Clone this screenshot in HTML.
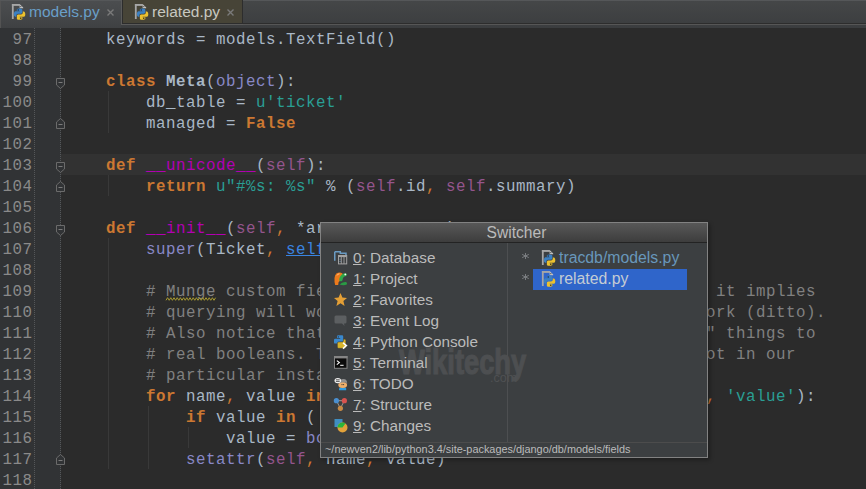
<!DOCTYPE html>
<html><head><meta charset="utf-8">
<style>
*{margin:0;padding:0;box-sizing:border-box}
html,body{width:866px;height:489px;overflow:hidden;background:#2B2B2B}
body{position:relative;font-family:"Liberation Sans",sans-serif}
.abs{position:absolute}
svg{position:absolute;overflow:visible}
#tabbar{position:absolute;left:0;top:0;width:866px;height:28px;background:linear-gradient(#454748,#3b3d3f)}
.tab{position:absolute;top:0;height:24px;font-size:15.5px;line-height:24px;white-space:pre}
#gutter{position:absolute;left:0;top:28px;width:61px;height:461px;background:#313335}
.dots{position:absolute;top:28px;width:1px;height:461px;background:repeating-linear-gradient(#555759 0 1px,transparent 1px 2px)}
.ln{position:absolute;left:0;width:32.5px;text-align:right;font-family:"Liberation Mono",monospace;font-size:15.8px;letter-spacing:0.52px;line-height:21px;color:#8a8a8a;height:21px;padding-top:2px}
.cl{position:absolute;left:66px;white-space:pre;font-family:"Liberation Mono",monospace;font-size:15.8px;letter-spacing:0.52px;line-height:21px;color:#A9B7C6;height:21px;padding-top:2px}
.k{color:#CC7832;font-weight:bold}
.meta{color:#A9B7C6;font-weight:bold}
.c{color:#CC7832}
.s{color:#2A9E94}
.m{color:#B200B2}
.sf{color:#94558D}
.b{color:#8888C6}
.cm{color:#808080}
.cmw{color:#808080;text-decoration:underline wavy #9a8a30;text-decoration-thickness:1px}
.lk{color:#3a84e0;text-decoration:underline}
.guide{position:absolute;width:1px;background:#393939}
.fold{position:absolute;left:56px}
#popup{position:absolute;left:320px;top:222px;width:388px;height:236px;background:#3C3F41;border:1px solid #828282;box-shadow:2px 2px 4px rgba(0,0,0,0.3)}
#ptitle{position:absolute;left:0;top:0;width:386px;height:20px;background:linear-gradient(#585858,#3d3d3d);border-bottom:1px solid #232323;color:#BBBBBB;font-size:15.6px;line-height:20px;text-align:center;padding-left:5px}
.item{position:absolute;left:32px;height:21px;line-height:21px;font-size:15.3px;color:#BBBBBB;white-space:pre}
.iico{position:absolute;left:13px}
#divider{position:absolute;left:186px;top:20px;width:1px;height:199px;background:#4d4f51}
#footer{position:absolute;left:0;top:219px;width:386px;height:15px;border-top:1px solid #4c4c4c;font-size:10.9px;line-height:13px;color:#BBBBBB;padding-left:4px;white-space:pre}
</style></head><body>

<div id="tabbar">
  <div class="abs" style="left:0;top:23px;width:866px;height:1px;background:#2d2d2d"></div>
  <div class="abs" style="left:0;top:24px;width:866px;height:1px;background:#565656"></div>
  <div class="abs" style="left:0;top:0;width:121px;height:28px;background:linear-gradient(#4c4e50,#3f4143);border-left:1px solid #535353"></div>
  <div class="abs" style="left:0;top:0;width:866px;height:1px;background:#555759"></div>
  <svg style="left:11px;top:3px" width="16" height="18" viewBox="0 0 16 18"><rect x="0.9" y="1" width="1.8" height="15" fill="#a6a6a6"/><rect x="0.9" y="1" width="7.9" height="1.9" fill="#a6a6a6"/>
    <path d="M8.6,1 L12.2,4.6 V5.2 H8.6 Z" fill="#c4c4c4"/><circle cx="9.8" cy="3.6" r="0.7" fill="#555"/>
    <g transform="translate(2.9,5.4) scale(0.114)">
    <path d="M49,0 C24,0 26,11 26,11 L26,22 H50 V26 H16 C16,26 0,24 0,49 C0,74 14,73 14,73 H22 V61 C22,61 22,47 36,47 H60 C60,47 74,47 74,34 V12 C74,12 76,0 49,0 Z" fill="#3b80c2"/>
    <circle cx="38" cy="14" r="7" fill="#1a2a40"/>
    <path d="M51,100 C76,100 74,89 74,89 L74,78 H50 V74 H84 C84,74 100,76 100,51 C100,26 86,27 86,27 H78 V39 C78,39 78,53 64,53 H40 C40,53 26,53 26,66 V88 C26,88 24,100 51,100 Z" fill="#ecc12e"/>
    <circle cx="60" cy="87" r="7" fill="#3a3018"/>
    </g></svg>
  <div class="tab" style="left:29px;color:#6a9fc8">models.py</div>
  <svg style="left:107px;top:9px" width="7" height="7"><path d="M0.5,0.5 L6.5,6.5 M6.5,0.5 L0.5,6.5" stroke="#7a7a7a" stroke-width="1.4"/></svg>
  <!-- tab 2 -->
  <div class="abs" style="left:121px;top:0;width:122px;height:25px;background:#5a5a5a"></div><div class="abs" style="left:122px;top:0;width:121px;height:24px;background:#2d2d2d"></div><div class="abs" style="left:123px;top:0;width:119px;height:23px;background:#474437"></div>
  <svg style="left:134px;top:3px" width="16" height="18" viewBox="0 0 16 18"><rect x="0.9" y="1" width="1.8" height="15" fill="#a6a6a6"/><rect x="0.9" y="1" width="7.9" height="1.9" fill="#a6a6a6"/>
    <path d="M8.6,1 L12.2,4.6 V5.2 H8.6 Z" fill="#c4c4c4"/><circle cx="9.8" cy="3.6" r="0.7" fill="#555"/>
    <g transform="translate(2.9,5.4) scale(0.114)">
    <path d="M49,0 C24,0 26,11 26,11 L26,22 H50 V26 H16 C16,26 0,24 0,49 C0,74 14,73 14,73 H22 V61 C22,61 22,47 36,47 H60 C60,47 74,47 74,34 V12 C74,12 76,0 49,0 Z" fill="#3b80c2"/>
    <circle cx="38" cy="14" r="7" fill="#1a2a40"/>
    <path d="M51,100 C76,100 74,89 74,89 L74,78 H50 V74 H84 C84,74 100,76 100,51 C100,26 86,27 86,27 H78 V39 C78,39 78,53 64,53 H40 C40,53 26,53 26,66 V88 C26,88 24,100 51,100 Z" fill="#ecc12e"/>
    <circle cx="60" cy="87" r="7" fill="#3a3018"/>
    </g></svg>
  <div class="tab" style="left:152px;color:#c8c8c0">related.py</div>
  <svg style="left:227px;top:9px" width="7" height="7"><path d="M0.5,0.5 L6.5,6.5 M6.5,0.5 L0.5,6.5" stroke="#7a7a7a" stroke-width="1.4"/></svg>
</div>

<div id="gutter"></div>
<div class="dots" style="left:34px"></div>
<div class="dots" style="left:60px"></div>
<div class="ln" style="top:28px">97</div>
<div class="ln" style="top:49px">98</div>
<div class="ln" style="top:70px">99</div>
<div class="ln" style="top:91px">100</div>
<div class="ln" style="top:112px">101</div>
<div class="ln" style="top:133px">102</div>
<div class="ln" style="top:154px">103</div>
<div class="ln" style="top:175px">104</div>
<div class="ln" style="top:196px">105</div>
<div class="ln" style="top:217px">106</div>
<div class="ln" style="top:238px">107</div>
<div class="ln" style="top:259px">108</div>
<div class="ln" style="top:280px">109</div>
<div class="ln" style="top:301px">110</div>
<div class="ln" style="top:322px">111</div>
<div class="ln" style="top:343px">112</div>
<div class="ln" style="top:364px">113</div>
<div class="ln" style="top:385px">114</div>
<div class="ln" style="top:406px">115</div>
<div class="ln" style="top:427px">116</div>
<div class="ln" style="top:448px">117</div>
<div class="ln" style="top:469px">118</div>
<div class="abs" style="left:61px;top:154px;width:805px;height:21px;background:#323232"></div>
<div class="guide" style="left:108px;top:91px;height:42px"></div>
<div class="guide" style="left:108px;top:175px;height:21px"></div>
<div class="guide" style="left:108px;top:238px;height:231px"></div>
<div class="guide" style="left:148px;top:406px;height:63px"></div>
<div class="guide" style="left:188px;top:427px;height:21px"></div>
<div class="cl" style="top:28px">    keywords = models.TextField()</div>
<div class="cl" style="top:49px"></div>
<div class="cl" style="top:70px">    <span class="k">class</span> <span class="meta">Meta</span>(<span class="b">object</span>):</div>
<div class="cl" style="top:91px">        db_table = <span class="s">u'ticket'</span></div>
<div class="cl" style="top:112px">        managed = <span class="k">False</span></div>
<div class="cl" style="top:133px"></div>
<div class="cl" style="top:154px">    <span class="k">def</span> <span class="m">__unicode__</span>(<span class="sf">self</span>):</div>
<div class="cl" style="top:175px">        <span class="k">return</span> <span class="s">u"#%s: %s"</span> % (<span class="sf">self</span>.id<span class="c">,</span> <span class="sf">self</span>.summary)</div>
<div class="cl" style="top:196px"></div>
<div class="cl" style="top:217px">    <span class="k">def</span> <span class="m">__init__</span>(<span class="sf">self</span><span class="c">,</span> *args<span class="c">,</span> xxxxxxxx):</div>
<div class="cl" style="top:238px">        <span class="b">super</span>(Ticket<span class="c">,</span> <span class="lk">self</span>).__init__(*args, **kwargs)</div>
<div class="cl" style="top:259px"></div>
<div class="cl" style="top:280px"><span class="cm">        # </span><span class="cm">Munge</span><span class="cm"> custom fiexxxxxxxxxxxxxxxxxxxxxxxxxxxxxxxxxxxxxx it implies</span></div>
<div class="cl" style="top:301px"><span class="cm">        # querying will worxxxxxxxxxxxxxxxxxxxxxxxxxxxxxxxxxxxxxork (ditto).</span></div>
<div class="cl" style="top:322px"><span class="cm">        # Also notice thatxxxxxxxxxxxxxxxxxxxxxxxxxxxxxxxxxxxxxx" things to</span></div>
<div class="cl" style="top:343px"><span class="cm">        # real booleans. Thxxxxxxxxxxxxxxxxxxxxxxxxxxxxxxxxxxxxxot in our</span></div>
<div class="cl" style="top:364px"><span class="cm">        # particular instanxxxxxxxxxxxxxxxxxxxxxxxxxxxxxxxxxxxxx</span></div>
<div class="cl" style="top:385px">        <span class="k">for</span> name<span class="c">,</span> value <span class="k">in</span>xxxxxxxxxxxxxxxxxxxxxxxxxxxxxxxxxxxxxx<span class="c">,</span> <span class="s">'value'</span>):</div>
<div class="cl" style="top:406px">            <span class="k">if</span> value <span class="k">in</span> (</div>
<div class="cl" style="top:427px">                value = <span class="b">bool</span>(value)</div>
<div class="cl" style="top:448px">            <span class="b">setattr</span>(<span class="sf">self</span><span class="c">,</span> name<span class="c">,</span> value)</div>
<div class="cl" style="top:469px"></div>
<svg style="left:166px;top:297px" width="52" height="4"><polyline points="0.00,3.3 1.60,0.7 3.20,3.3 4.80,0.7 6.40,3.3 8.00,0.7 9.60,3.3 11.20,0.7 12.80,3.3 14.40,0.7 16.00,3.3 17.60,0.7 19.20,3.3 20.80,0.7 22.40,3.3 24.00,0.7 25.60,3.3 27.20,0.7 28.80,3.3 30.40,0.7 32.00,3.3 33.60,0.7 35.20,3.3 36.80,0.7 38.40,3.3 40.00,0.7 41.60,3.3 43.20,0.7 44.80,3.3 46.40,0.7 48.00,3.3 49.60,0.7" fill="none" stroke="#a89a30" stroke-width="1"/></svg>
<svg class="fold" style="top:78px" width="9" height="11"><path d="M0.5,0.5 H8.5 V7 L4.5,10.5 L0.5,7 Z" fill="#313335" stroke="#6b6b6b" stroke-width="1"/><path d="M2.5,4.5 H6.5" stroke="#7a7a7a" stroke-width="1"/></svg><svg class="fold" style="top:118px" width="9" height="11"><path d="M0.5,10.5 H8.5 V4 L4.5,0.5 L0.5,4 Z" fill="#313335" stroke="#6b6b6b" stroke-width="1"/><path d="M2.5,6.5 H6.5" stroke="#7a7a7a" stroke-width="1"/></svg><svg class="fold" style="top:162px" width="9" height="11"><path d="M0.5,0.5 H8.5 V7 L4.5,10.5 L0.5,7 Z" fill="#313335" stroke="#6b6b6b" stroke-width="1"/><path d="M2.5,4.5 H6.5" stroke="#7a7a7a" stroke-width="1"/></svg><svg class="fold" style="top:181px" width="9" height="11"><path d="M0.5,10.5 H8.5 V4 L4.5,0.5 L0.5,4 Z" fill="#313335" stroke="#6b6b6b" stroke-width="1"/><path d="M2.5,6.5 H6.5" stroke="#7a7a7a" stroke-width="1"/></svg><svg class="fold" style="top:225px" width="9" height="11"><path d="M0.5,0.5 H8.5 V7 L4.5,10.5 L0.5,7 Z" fill="#313335" stroke="#6b6b6b" stroke-width="1"/><path d="M2.5,4.5 H6.5" stroke="#7a7a7a" stroke-width="1"/></svg><svg class="fold" style="top:454px" width="9" height="11"><path d="M0.5,10.5 H8.5 V4 L4.5,0.5 L0.5,4 Z" fill="#313335" stroke="#6b6b6b" stroke-width="1"/><path d="M2.5,6.5 H6.5" stroke="#7a7a7a" stroke-width="1"/></svg>

<div id="popup">
  <div id="ptitle">Switcher</div>
  <div id="divider"></div>
  <div class="abs" style="left:78px;top:121px;font-size:35px;line-height:35px;font-weight:bold;color:#4d4f51;-webkit-text-stroke:1.2px #4d4f51;transform:scaleX(0.78);transform-origin:0 0;white-space:pre">Wikitechy</div>
  <div class="abs" style="left:169px;top:149px;font-size:12.5px;line-height:13px;color:#4f5153;white-space:pre">.com</div>
  <svg class="iico" style="top:28px" width="16" height="16"><path d="M0.75,0.75 H6.3 V2.3 H12 V5" fill="none" stroke="#6a9cc4" stroke-width="1.5"/><path d="M0.75,0.75 V9.7" stroke="#6a9cc4" stroke-width="1.5"/>
 <rect x="4.5" y="4.5" width="8.2" height="8.4" fill="#3c3f41" stroke="#a3a3a3" stroke-width="1"/>
 <rect x="4.5" y="4.5" width="8.2" height="1.6" fill="#a3a3a3"/>
 <path d="M7.3,5 V12.9 M10,5 V12.9" stroke="#a3a3a3" stroke-width="0.9"/>
 <path d="M5.6,8.2 H6.6 M5.6,10.4 H6.6" stroke="#7aa0c0" stroke-width="0.9"/></svg>
<div class="item" style="top:24px"><u>0</u>: Database</div>
<svg class="iico" style="top:49px" width="16" height="16"><path d="M2.6,1.3 Q5.5,-0.3 8.2,1.2 Q9.6,2.5 8.8,5 Q7.6,8.5 4.6,10 L4.2,13 H1.2 Q0.2,10.5 0.5,6 Q0.8,2.8 2.6,1.3 Z" fill="#ec7a1c"/>
 <path d="M3,3.5 Q3.5,1.8 5.5,1.8" stroke="#ffc080" stroke-width="1" fill="none"/>
 <path d="M5.2,8.6 Q5.2,3.8 9,1.8 Q11.5,0.6 13.2,2.4 Q12.6,4.2 10.4,4.6 Q8.6,5.6 8.4,8.6 Q7.2,10.2 5.2,8.6 Z" fill="#2fa84a"/>
 <path d="M5.6,12.6 Q8,9.6 12,10 Q13.6,10.8 12.8,12.4 Q10,13.8 5.6,12.6 Z" fill="#2a9a44"/>
 <circle cx="11.3" cy="2.4" r="0.9" fill="#fff"/></svg>
<div class="item" style="top:45px"><u>1</u>: Project</div>
<svg class="iico" style="top:70px" width="16" height="16"><path d="M6.5,0 L8.4,4.6 L13,5 L9.4,8 L10.6,13 L6.5,10.3 L2.4,13 L3.6,8 L0,5 L4.6,4.6 Z" fill="#e39f36"/></svg>
<div class="item" style="top:66px"><u>2</u>: Favorites</div>
<svg class="iico" style="top:92px" width="16" height="16"><path d="M2,0.5 H11 Q12.5,0.5 12.5,2 V7 Q12.5,8.5 11,8.5 H10 L10.5,11 L8,8.5 H2 Q0.5,8.5 0.5,7 V2 Q0.5,0.5 2,0.5 Z" fill="#5c5f61"/></svg>
<div class="item" style="top:87px"><u>3</u>: Event Log</div>
<svg class="iico" style="top:112px" width="16" height="16"><path d="M4.2,0.3 H8 Q9.2,0.3 9.2,1.5 V5.6 Q9.2,6.8 8,6.8 H4.6 Q3.4,6.8 3.4,8 V8.6 H1.2 Q0,8.6 0,7.4 V5 Q0,3.8 1.2,3.8 H6.2 V3 H3 V1.5 Q3,0.3 4.2,0.3 Z" fill="#3a88cc"/>
 <path d="M4.6,13.3 H10.6 Q11.8,13.3 11.8,12.1 V5.4 Q11.8,4.2 10.6,4.2 H9.4 V5.8 Q9.4,7 8.2,7 H4.8 Q3.4,7 3.4,8.2 V12.1 Q3.4,13.3 4.6,13.3 Z" fill="#d9b52c" stroke="#3a3a30" stroke-width="0.4"/>
 <circle cx="4.3" cy="1.9" r="0.6" fill="#1e2a38"/>
 <path d="M9,7.8 L12.4,10.6 L9,13.6" fill="none" stroke="#fff" stroke-width="1.5"/></svg>
<div class="item" style="top:108px"><u>4</u>: Python Console</div>
<svg class="iico" style="top:133px" width="16" height="16"><rect x="0.5" y="0.5" width="12.5" height="11.8" fill="#0c0c0c" stroke="#858585" stroke-width="1"/><rect x="0" y="0" width="13.5" height="2.4" fill="#858585"/>
 <path d="M2.8,4.6 L5.4,6.6 L2.8,8.6" fill="none" stroke="#fff" stroke-width="1.1"/><path d="M6.2,9.3 H9.6" stroke="#fff" stroke-width="1"/></svg>
<div class="item" style="top:129px"><u>5</u>: Terminal</div>
<svg class="iico" style="top:151px" width="16" height="16"><path d="M5,16.3 V14.8 Q5,13.6 6.5,13.6 H10.7 Q12.2,13.6 12.2,14.8 V16.3 Z" fill="#2e9ae0"/>
 <ellipse cx="8.7" cy="10.9" rx="4.4" ry="3" fill="#eeae6a"/>
 <path d="M5.4,9.8 Q5.2,5 9.4,5 Q13.4,5.1 13.2,9.8 L12.2,8.4 H7 Z" fill="#8f8f8f"/>
 <circle cx="8" cy="10.6" r="0.55" fill="#333"/><circle cx="9.6" cy="10.6" r="0.55" fill="#333"/>
 <ellipse cx="3.8" cy="6.6" rx="3.3" ry="2.7" fill="#f2f2f2"/><path d="M1.9,5.8 H5.7 M1.9,7.4 H5.7" stroke="#444" stroke-width="0.9"/></svg>
<div class="item" style="top:150px"><u>6</u>: TODO</div>
<svg class="iico" style="top:173px" width="16" height="16"><path d="M2.4,4.7 H10.4 L6.4,12.3 Z" fill="none" stroke="#a09890" stroke-width="1"/>
 <circle cx="2.4" cy="4.7" r="2.6" fill="#4a8fd0"/><circle cx="10.4" cy="4.7" r="2.6" fill="#d9534f"/><circle cx="6.4" cy="12.3" r="2.6" fill="#c88a44"/></svg>
<div class="item" style="top:171px"><u>7</u>: Structure</div>
<svg class="iico" style="top:196px" width="16" height="16"><rect x="0.5" y="0" width="8" height="8" fill="#3f8ec2"/>
 <circle cx="8.5" cy="8.5" r="5" fill="#e2a23a"/><path d="M8.5,8.5 H3.5 A5,5 0 0 1 11.4,4.4 Z" fill="#2ab53a"/></svg>
<div class="item" style="top:192px"><u>9</u>: Changes</div>
<div class="abs" style="left:212px;top:46px;width:154px;height:21px;background:#2F65CA"></div>
<svg style="left:200px;top:30px" width="9" height="7"><path d="M4.5,0 V6 M1.2,1.4 L7.8,4.6 M7.8,1.4 L1.2,4.6" stroke="#7a7d80" stroke-width="1"/></svg>
<svg style="left:220px;top:26px" width="16" height="18" viewBox="0 0 16 18"><rect x="0.9" y="1" width="1.8" height="15" fill="#a6a6a6"/><rect x="0.9" y="1" width="7.9" height="1.9" fill="#a6a6a6"/>
    <path d="M8.6,1 L12.2,4.6 V5.2 H8.6 Z" fill="#c4c4c4"/><circle cx="9.8" cy="3.6" r="0.7" fill="#555"/>
    <g transform="translate(2.9,5.4) scale(0.114)">
    <path d="M49,0 C24,0 26,11 26,11 L26,22 H50 V26 H16 C16,26 0,24 0,49 C0,74 14,73 14,73 H22 V61 C22,61 22,47 36,47 H60 C60,47 74,47 74,34 V12 C74,12 76,0 49,0 Z" fill="#3b80c2"/>
    <circle cx="38" cy="14" r="7" fill="#1a2a40"/>
    <path d="M51,100 C76,100 74,89 74,89 L74,78 H50 V74 H84 C84,74 100,76 100,51 C100,26 86,27 86,27 H78 V39 C78,39 78,53 64,53 H40 C40,53 26,53 26,66 V88 C26,88 24,100 51,100 Z" fill="#ecc12e"/>
    <circle cx="60" cy="87" r="7" fill="#3a3018"/>
    </g></svg>
<div class="item" style="left:238px;top:24px;color:#6897BB;font-size:15.8px">tracdb/models.py</div>
<svg style="left:200px;top:51px" width="9" height="7"><path d="M4.5,0 V6 M1.2,1.4 L7.8,4.6 M7.8,1.4 L1.2,4.6" stroke="#7a7d80" stroke-width="1"/></svg>
<svg style="left:220px;top:47px" width="16" height="18" viewBox="0 0 16 18"><rect x="0.9" y="1" width="1.8" height="15" fill="#a6a6a6"/><rect x="0.9" y="1" width="7.9" height="1.9" fill="#a6a6a6"/>
    <path d="M8.6,1 L12.2,4.6 V5.2 H8.6 Z" fill="#c4c4c4"/><circle cx="9.8" cy="3.6" r="0.7" fill="#555"/>
    <g transform="translate(2.9,5.4) scale(0.114)">
    <path d="M49,0 C24,0 26,11 26,11 L26,22 H50 V26 H16 C16,26 0,24 0,49 C0,74 14,73 14,73 H22 V61 C22,61 22,47 36,47 H60 C60,47 74,47 74,34 V12 C74,12 76,0 49,0 Z" fill="#3b80c2"/>
    <circle cx="38" cy="14" r="7" fill="#1a2a40"/>
    <path d="M51,100 C76,100 74,89 74,89 L74,78 H50 V74 H84 C84,74 100,76 100,51 C100,26 86,27 86,27 H78 V39 C78,39 78,53 64,53 H40 C40,53 26,53 26,66 V88 C26,88 24,100 51,100 Z" fill="#ecc12e"/>
    <circle cx="60" cy="87" r="7" fill="#3a3018"/>
    </g></svg>
<div class="item" style="left:238px;top:45px;color:#c4ccd4;font-size:15.8px">related.py</div>
  <div id="footer">~/newven2/lib/python3.4/site-packages/django/db/models/fields</div>
</div>

</body></html>
